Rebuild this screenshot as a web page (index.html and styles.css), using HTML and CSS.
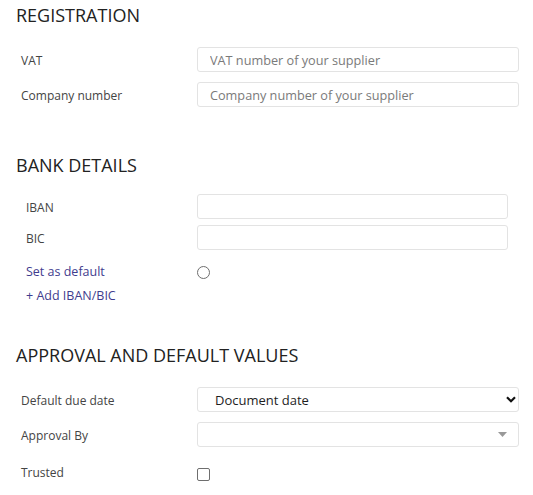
FILE: index.html
```html
<!DOCTYPE html>
<html>
<head>
<meta charset="utf-8">
<link rel="stylesheet" href="styles.css">
</head>
<body>
<div class="page">
  <section class="sec sec-reg">
    <h2 class="title">REGISTRATION</h2>
    <div class="rows">
      <div class="row">
        <label class="lbl">VAT</label>
        <input class="field" type="text" placeholder="VAT number of your supplier">
      </div>
      <div class="row">
        <label class="lbl">Company number</label>
        <input class="field" type="text" placeholder="Company number of your supplier">
      </div>
    </div>
  </section>

  <section class="sec sec-bank">
    <h2 class="title">BANK DETAILS</h2>
    <div class="rows rows-bank">
      <div class="row">
        <label class="lbl">IBAN</label>
        <input class="field" type="text">
      </div>
      <div class="row">
        <label class="lbl">BIC</label>
        <input class="field" type="text">
      </div>
    </div>
    <div class="row row-check row-default">
      <span class="lbl link">Set as default</span>
      <span class="radio"></span>
    </div>
    <div class="add link">+ Add IBAN/BIC</div>
  </section>

  <section class="sec sec-appr">
    <h2 class="title">APPROVAL AND DEFAULT VALUES</h2>
    <div class="rows">
      <div class="row">
        <label class="lbl">Default due date</label>
        <div class="select-wrap">
          <select class="field select">
            <option>Document date</option>
          </select>
          <svg class="chev" width="10" height="7" viewBox="0 0 10 7"><path d="M1 1.2 L5 5.2 L9 1.2" fill="none" stroke="#111" stroke-width="2.2"/></svg>
        </div>
      </div>
      <div class="row">
        <label class="lbl">Approval By</label>
        <div class="select-wrap">
          <div class="field combo"></div>
          <svg class="tri" width="9" height="5" viewBox="0 0 9 5"><path d="M0 0 H9 L4.5 5 Z" fill="#999"/></svg>
        </div>
      </div>
    </div>
    <div class="row row-check row-trusted">
      <label class="lbl">Trusted</label>
      <span class="checkbox"></span>
    </div>
  </section>
</div>
</body>
</html>
```

FILE: styles.css
```css
* { box-sizing: border-box; }
html, body { margin: 0; padding: 0; background: #fff; }
body {
  font-family: "Open Sans", "Noto Sans", "DejaVu Sans", sans-serif;
  color: #222;
}
.page {
  width: 533px;
  padding: 0 14px 0 16px;
}
.title {
  margin: 0;
  font-size: 18px;
  line-height: 24px;
  font-weight: 400;
  color: #222;
}
.sec-reg .title { padding-top: 3px; }
.sec-bank .title { margin-top: 46px; }
.sec-appr .title { margin-top: 38px; }

.rows {
  display: flex;
  flex-direction: column;
  gap: 10px;
  margin-top: 20px;
}
.sec-bank .rows { margin-top: 17px; gap: 6px; }
.sec-appr .rows { margin-top: 20px; }

.row {
  display: grid;
  grid-template-columns: 181px 1fr;
  align-items: center;
  height: 25px;
}
.lbl {
  padding-left: 5px;
  font-size: 12px;
  color: #444;
  padding-top: 2px;
}
.sec-bank .lbl { padding-left: 10px; }
.field {
  display: block;
  width: 100%;
  height: 25px;
  border: 1px solid #e3e3e3;
  border-radius: 3px;
  background: #fff;
  font-family: inherit;
  font-size: 12.7px;
  color: #222;
  padding: 0 12px;
  outline: none;
}
.field::placeholder { color: #7a7a7a; }
.rows-bank .field { width: 311px; }

.select-wrap { position: relative; }
.select {
  appearance: none;
  -webkit-appearance: none;
  padding-left: 17px;
  font-size: 13px;
  color: #1e1e1e;
}
.chev { position: absolute; right: 3px; top: 9px; }
.tri { position: absolute; right: 12px; top: 10px; }

.row-default { margin-top: 11px; height: 20px; }
.link { color: #3f3c8e; }
.sec-bank .row-default .lbl { color: #3f3c8e; padding-top: 0; font-size: 12.5px; }
.radio {
  width: 13px;
  height: 13px;
  border: 1px solid #6e6e6e;
  border-radius: 50%;
  margin-top: 2px;
}
.add {
  font-size: 12.5px;
  padding-left: 10px;
  margin-top: 6px;
  line-height: 18px;
}
.row-trusted { margin-top: 20px; height: 14px; }
.checkbox {
  width: 13px;
  height: 13px;
  border: 1px solid #6e6e6e;
  border-radius: 2px;
}
.row-trusted .lbl { padding-top: 0; margin-top: -4px; }
```
